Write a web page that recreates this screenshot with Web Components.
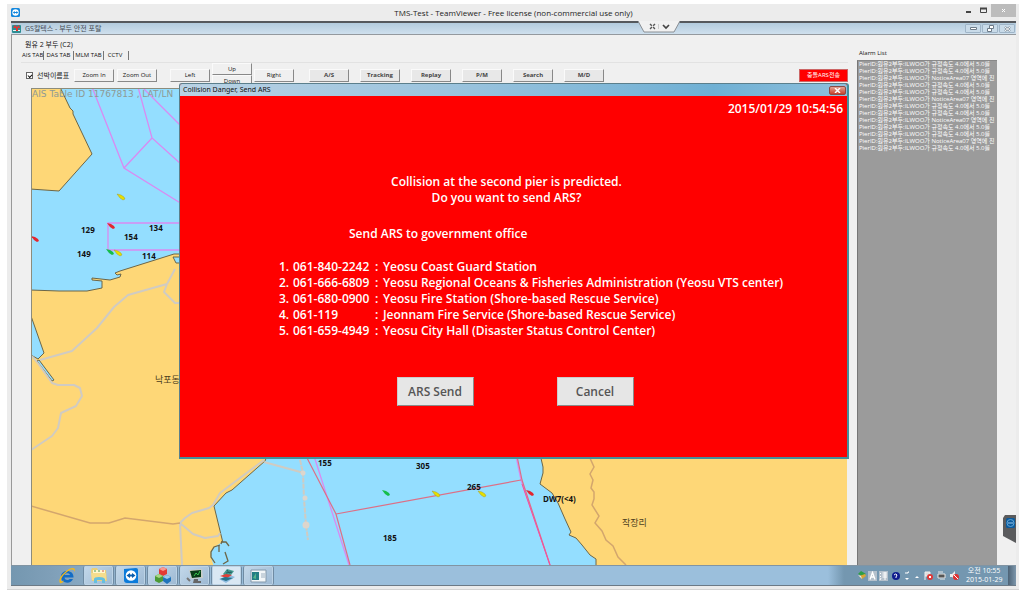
<!DOCTYPE html>
<html lang="ko">
<head>
<meta charset="utf-8">
<title>TMS-Test - TeamViewer</title>
<style>
body { margin: 0; background: #fff; font-family: "Open Sans", "Noto Sans CJK KR", sans-serif; color: #222; }
</style>
</head>
<body>
<remote-window>
  <remote-titlebar slot="title">TMS-Test - TeamViewer - Free license (non-commercial use only)</remote-titlebar>
  <mdi-titlebar>GS칼텍스 - 부두 안전 포탈</mdi-titlebar>
  <pier-portal>
    <pier-header slot="head">원유 2 부두 (C2)</pier-header>
    <map-toolbar slot="head"></map-toolbar>
    <sea-map slot="map"></sea-map>
    <alarm-list slot="side">Alarm List</alarm-list>
  </pier-portal>
  <task-bar></task-bar>
  <collision-dialog slot="over" heading="Collision Danger, Send ARS">
    <time slot="time">2015/01/29 10:54:56</time>
    <span slot="message">Collision at the second pier is predicted.<br>Do you want to send ARS?</span>
    <span slot="caption">Send ARS to government office</span>
  </collision-dialog>
</remote-window>

<script>
function define(name, html, setup) {
  customElements.define(name, class extends HTMLElement {
    constructor() {
      super();
      this.attachShadow({ mode: "open" }).innerHTML = html;
    }
    connectedCallback() { if (setup) setup(this.shadowRoot, this); }
  });
}

define("remote-window", `
<style>
:host { display: flex; flex-direction: column; box-sizing: border-box; min-height: calc(100vh - 10px); margin: 4px 5px 6px 7px; padding: 0 3px 3px 4px; background: #ececec; box-shadow: 0 1px 0 #d4d4d4; }
.screen { position: relative; flex: 1; display: flex; flex-direction: column; border-top: 2px solid #55585c; }
.pull { position: absolute; top: -2px; right: 336px; width: 42px; height: 12px; display: block; }
.side { position: absolute; right: 0; bottom: 43px; width: 13px; height: 28px; display: block; }
</style>
<slot name="title"></slot>
<div class="screen">
  <slot></slot>
  <slot name="over"></slot>
  <svg class="pull" viewBox="0 0 42 12"><path d="M0 0H42L36 11H6Z" fill="#f1f1f1"/><path d="M0 0L6 11H36L42 0" fill="none" stroke="#8a8f94"/><path d="M12 3l5 5M17 3l-5 5" stroke="#555" stroke-width="1.4" stroke-dasharray="2.6 1.8"/><path d="M20.500 3v5" stroke="#ccc"/><path d="M25 4l3 3 3-3" fill="none" stroke="#444" stroke-width="1.700"/></svg>
  <svg class="side" viewBox="0 0 13 28"><path d="M2 0H13V28L0 21V3Z" fill="#5a5b5d"/><rect x="3" y="3" width="9" height="10" rx="1.500" fill="#0b5a9c"/><ellipse cx="7.500" cy="8" rx="3.500" ry="3.500" fill="none" stroke="#5fa4d6"/><path d="M5 8h5" stroke="#9cc9ea"/></svg>
</div>`);

define("remote-titlebar", `
<style>
:host { display: grid; grid-template-columns: 80px 1fr 80px; height: 17px; align-items: center; font-size: 8px; line-height: 17px; color: #222; }
.logo { width: 9px; height: 9px; display: block; }
.title { text-align: center; white-space: nowrap; }
.controls { display: flex; justify-content: flex-end; align-self: start; }
button { border: 0; padding: 0; background: none; height: 13px; width: 15px; display: grid; place-items: center; }
button.close { width: 25px; background: #bcbcbc; }
svg { display: block; }
</style>
<svg class="logo" viewBox="0 0 9 9"><rect width="9" height="9" rx="1.500" fill="#1387dd"/><circle cx="4.500" cy="4.500" r="3.200" fill="#fff"/><path d="M1.800 4.500l2-1.500v1h1.500v-1l2 1.500-2 1.500v-1h-1.500v1z" fill="#1387dd"/></svg>
<span class="title"><slot></slot></span>
<span class="controls">
  <button aria-label="Minimize"><svg width="7" height="7"><path d="M1 5h5" stroke="#444" stroke-width="2"/></svg></button>
  <button aria-label="Maximize"><svg width="7" height="7"><path d="M.5 1.500h6v4h-6z" fill="none" stroke="#444"/><path d="M0 1.500h7" stroke="#444" stroke-width="2"/></svg></button>
  <button class="close" aria-label="Close"><svg width="7" height="7"><path d="M2 2l3 3M5 2l-3 3" stroke="#fff"/></svg></button>
</span>`);

define("mdi-titlebar", `
<style>
:host { display: flex; align-items: center; height: 11px; padding: 0 1px; gap: 4px; border-bottom: 1px solid #94999e; background: linear-gradient(#b3cbdd, #cfe0ee); font-size: 7px; line-height: 11px; color: #444c55; }
.name { flex: 1; white-space: nowrap; }
button { width: 16px; height: 9px; box-sizing: border-box; padding: 0; border: 1px solid #9fb5c8; border-radius: 1px; background: #c9dbe9; display: grid; place-items: center; margin: 0; }
svg { display: block; }
.btns { display: flex; gap: 1px; }
</style>
<svg width="9" height="9" viewBox="0 0 9 9"><rect y="1" width="9" height="8" rx="1" fill="#2c8d92"/><path d="M1 4l2-3 2 2 2-2 1 3z" fill="#d83b3b"/><path d="M1 6h7v1H1z" fill="#e9f4f4"/><path d="M4 4h2v3H4z" fill="#d33"/></svg>
<span class="name"><slot></slot></span>
<span class="btns">
<button aria-label="Minimize child"><svg width="7" height="5"><path d="M.5 1.500h6v2h-6z" fill="#fff" stroke="#6d7b88"/></svg></button>
<button aria-label="Restore child"><svg width="7" height="7"><path d="M2.500 .5h4v3h-4zM.5 3.500h4v3h-4z" fill="#fff" stroke="#6d7b88"/></svg></button>
<button aria-label="Close child"><svg width="7" height="6"><path d="M1 1l5 4M6 1l-5 4" stroke="#6d7b88" stroke-width="2"/><path d="M1 1l5 4M6 1l-5 4" stroke="#fff"/></svg></button>
</span>`);

define("pier-portal", `
<style>
:host { flex: 1; display: grid; grid-template-columns: minmax(0, 1fr) 140px; column-gap: 9px; padding: 0 19px 0 9px; background: #f0f0f0; border-left: 1px solid #999; }
.main { display: flex; flex-direction: column; }
.map { flex: 1; display: flex; margin-left: 10px; }
</style>
<div class="main"><slot name="head"></slot><div class="map"><slot name="map"></slot></div></div>
<slot name="side"></slot>`);

define("pier-header", `
<style>
:host { display: block; padding-top: 4px; border-bottom: 1px solid #e2e2e2; font-size: 6px; line-height: 11px; color: #111; }
h1 { margin: 0 0 0 4px; font: inherit; font-size: 7px; line-height: 11px; }
nav { display: flex; padding-left: 1px; }
a { color: inherit; text-decoration: none; box-sizing: border-box; width: 30px; text-align: center; border-right: 1px solid #777; line-height: 9px; margin: 1px 0 2px; white-space: nowrap; }
a:first-child { width: 22px; text-align: left; }
a:last-child { width: 25px; padding-right: 2px; }
</style>
<h1><slot></slot></h1>
<nav><a href="#ais">AIS TAB</a><a href="#das">DAS TAB</a><a href="#mlm">MLM TAB</a><a href="#cctv">CCTV</a></nav>`);

define("tool-button", `
<style>
:host { display: block; width: 40px; height: 13px; }
button { width: 100%; height: 100%; box-sizing: border-box; display: block; padding: 0; font: inherit; color: #111; line-height: 9px; background: #f0f0f0; border: 1px solid #fafafa; border-right: 1px solid #888; border-bottom: 1px solid #888; white-space: nowrap; }
:host([bold]) button { font-weight: 700; color: #444; background: #e8e8e8; }
:host([alert]) { width: 49px; }
:host([alert]) button { background: #f00; color: #fff; border-color: #c66; font-weight: 400; }
</style>
<button><slot></slot></button>`);

define("map-toolbar", `
<style>
:host { display: flex; align-items: center; height: 24px; padding: 0 0 1px 5px; font-size: 6px; color: #222; }
label { display: flex; align-items: center; gap: 4px; width: 48px; font-size: 7px; white-space: nowrap; }
input { appearance: none; width: 7px; height: 7px; margin: 0; border: 1px solid #666; background: #fff; display: grid; place-items: center; box-sizing: border-box; }
input:checked::before { content: ""; width: 3px; height: 2px; border: solid #111; border-width: 0 0 1px 1px; transform: rotate(-45deg); }
.zoom, .tools { display: flex; }
.zoom { gap: 3px; }
.pan { display: flex; align-items: center; gap: 2px; margin: 0 15px 0 13px; }
.stack { display: flex; flex-direction: column; }
.stack tool-button { height: 12px; }
.tools { gap: 11px; flex: 1; }
</style>
<label><input type="checkbox" checked>선박이름표</label>
<div class="zoom"><tool-button>Zoom In</tool-button><tool-button>Zoom Out</tool-button></div>
<div class="pan"><tool-button>Left</tool-button><div class="stack"><tool-button>Up</tool-button><tool-button>Down</tool-button></div><tool-button>Right</tool-button></div>
<div class="tools"><tool-button bold>A/S</tool-button><tool-button bold>Tracking</tool-button><tool-button bold>Replay</tool-button><tool-button bold>P/M</tool-button><tool-button bold>Search</tool-button><tool-button bold>M/D</tool-button></div>
<tool-button alert>충돌ARS전송</tool-button>`);

define("sea-map", `
<style>
:host { flex: 1; display: block; position: relative; min-height: 300px; margin-right: 1px; border: solid #8c8c7c; border-width: 1px 0 0 1px; background: #94deff; overflow: hidden; }
svg { position: absolute; inset: 0; width: 100%; height: 100%; }
.land { fill: #fed777; stroke: #6c6648; }
.road { fill: none; stroke: #d0cbc2; stroke-width: 2; stroke-linejoin: round; }
.path { fill: none; stroke: #d3a66d; stroke-width: 1.500; }
.lane { fill: none; stroke: #d98af2; stroke-width: 1.300; }
.red { fill: none; stroke: #dd6f86; stroke-width: 1.200; }
.shore { fill: none; stroke: #6c6648; stroke-width: 1.300; }
.depth { font-size: 8px; font-weight: 700; fill: #111; }
.place { font-size: 9px; fill: #4a3c1c; }
.info { font: 9px "DejaVu Sans", sans-serif; fill: #8e9a95; }
</style>
<svg role="img" aria-label="Pier chart">
<defs><path id="ship" d="M-4-3L0-2L3 0L4 2L2 3L-1 1Z"/></defs>
<g transform="translate(-32 -90)">
<path class="land" d="M30 86H59L70 109L73 112V115L92 155L59 192L30 190Z"/>
<path class="land" d="M270 255H174L155 261L120 272L115 274L117 276L121 275L120 278L110 281L92 279V281L102 282V289L87 292L59 292L30 291V568H214L223 544L214 507L226 494L232 491L265 462L270 450Z"/>
<path class="land" d="M540 455L543 468V474L540 485L552 494L558 504L565 520L571 533L569 536L576 539L582 546L590 556L596 560V568H3000V455Z"/>
<g fill="#94deff" stroke="#6c6648"><path d="M31 317L44 354L38 360L31 356ZM37 362L39 361L54 381L52 382ZM173 258H180V264H176Z"/></g>
<path d="M222 543L216 547L211 552V558L214 568H230V545Z" fill="#94deff"/>
<path class="shore" d="M222 542L221 545M220 546L214 548L211 553V558L215 564M219 546V553M222 543H226L229 547M225 553L228 562L223 565"/>
<path class="road" d="M175 270L167 285L128 296L114 308L97 329L72 352L40 361M167 285L164 293L175 304H180M32 357L40 367L52 384L58 386H74L80 389L82 397L76 407L61 414L58 429L52 437L31 451M264 461L220 494L213 506L209 509L192 514L185 519L180 524L182 566M180 524L193 535L205 539L218 537L220 534M264 463L304 474"/>
<path class="road" d="M300 461L303 474L304 500L306 526L308 541" stroke-dasharray="5 1"/>
<g fill="#ddd5cc"><circle cx="303" cy="474" r="2.500"/><circle cx="305" cy="499" r="2.500"/><circle cx="306" cy="526" r="3.500"/></g>
<path class="path" d="M31 507L90 524H109L125 519L173 525L180 524M589 457L594 468L590 475L593 481L591 489L594 493V500L592 506L599 517L595 524L602 532L606 541L613 547L618 558L626 566"/>
<path class="lane" d="M92 88L124 169L182 205M138 88L152 139L182 166M142 88L182 128M124 169L152 139M182 224H108V251H182M314 457L349 566M516 457L521 481L550 566"/>
<path class="red" d="M306 457L336 515L350 566M336 515L521 481M517 457L522 481L550 566"/>
<path d="M522 485L550 566" stroke="#f0539d"/>
<g fill="#e3262e"><use href="#ship" x="35" y="240"/><use href="#ship" x="111" y="227"/><use href="#ship" x="530" y="494"/></g>
<g fill="#e7df00" stroke="#998f20" stroke-width=".4"><use href="#ship" x="121" y="198"/><use href="#ship" x="118" y="254"/><use href="#ship" x="436" y="495"/><use href="#ship" x="482" y="495"/></g>
<g fill="#16bd4a"><use href="#ship" x="110" y="253"/><use href="#ship" x="386" y="494"/></g>
<g class="depth"><text x="81" y="234">129</text><text x="149" y="232">134</text><text x="124" y="241">154</text><text x="77" y="258">149</text><text x="142" y="260">114</text><text x="318" y="467">155</text><text x="416" y="470">305</text><text x="467" y="491">265</text><text x="383" y="542">185</text><text x="543" y="503">DW7(&lt;4)</text></g>
<text class="place" x="155" y="384">낙포동</text><text class="place" x="622" y="527">작장리</text>
<text class="info" x="32" y="98">AIS Table ID 11767813 , LAT/LN</text>
</g></svg>`);

define("alarm-list", `
<style>
:host { display: flex; flex-direction: column; padding-top: 13px; font-size: 6px; min-width: 0; }
h2 { margin: 0 0 2px 2px; font: inherit; line-height: 10px; color: #111; }
ul { flex: 1; margin: 0; padding: 0 0 0 1px; list-style: none; background: #9b9b9b; border-left: 1px solid #777; border-top: 1px solid #888; box-sizing: border-box; color: #fff; }
li { line-height: 7px; white-space: nowrap; }
</style>
<h2><slot></slot></h2><ul></ul>`, root => {
  const speed = "PierID:원유2부두:ILWOO가 규정속도 4.0에서 5.0를";
  const area = "PierID:원유2부두:ILWOO가 NoticeArea07 영역에 진";
  const ul = root.querySelector("ul");
  ul.replaceChildren(...[0,0,1,0,0,1,0,0,1,0,0,1,0].map(kind => {
    const li = document.createElement("li");
    li.textContent = kind ? area : speed;
    return li;
  }));
});

define("collision-dialog", `
<style>
:host { position: absolute; left: 168px; right: 167px; top: 60px; box-sizing: border-box; border: 1px solid #5b7f8c; border-right: 2px solid #43909c; border-bottom: 2px solid #43909c; border-radius: 3px 3px 0 0; background: #f00; color: #fff; font-size: 12px; font-weight: 600; line-height: 16px; }
header { display: flex; align-items: center; justify-content: space-between; height: 12px; padding: 0 1px 0 3px; border-radius: 2px 2px 0 0; background: linear-gradient(90deg, #b9d2e4, #9cc4de 40%, #6fb0d4 80%, #8fc0dc); color: #111; font-family: "Noto Sans", sans-serif; font-size: 7px; font-weight: 400; line-height: 12px; }
header button { width: 17px; height: 9px; padding: 0; border: 1px solid #8d4a44; border-radius: 2px; background: linear-gradient(#e3a395, #c8402b); display: grid; place-items: center; }
.body { display: flex; flex-direction: column; padding: 5px 4px 51px; }
.time { align-self: flex-end; }
.message { text-align: center; padding: 57px 14px 20px 0; }
.caption { padding-left: 165px; }
ol { display: grid; grid-template-columns: 14px 82px 8px auto; justify-content: start; margin: 17px 0 38px 95px; padding: 0; list-style: none; white-space: nowrap; }
li { display: contents; }
.actions { display: flex; justify-content: center; gap: 83px; padding-left: 3px; }
.actions button { width: 77px; height: 29px; padding: 0; border: 1px solid #8a8a8a; border-top-color: #ccc; border-left-color: #ccc; background: #e6e6e6; color: #555; font: inherit; }
</style>
<header><span class="heading"></span><button aria-label="Close"><svg width="7" height="5"><path d="M1 0l5 5M6 0l-5 5" stroke="#fff" stroke-width="1.500"/></svg></button></header>
<div class="body">
<div class="time"><slot name="time"></slot></div>
<div class="message"><slot name="message"></slot></div>
<div class="caption"><slot name="caption"></slot></div>
<ol></ol>
<div class="actions"><button>ARS Send</button><button>Cancel</button></div>
</div>`, (root, host) => {
  root.querySelector(".heading").textContent = host.getAttribute("heading");
  const offices = [
    ["061-840-2242", "Yeosu Coast Guard Station"],
    ["061-666-6809", "Yeosu Regional Oceans & Fisheries Administration (Yeosu VTS center)"],
    ["061-680-0900", "Yeosu Fire Station (Shore-based Rescue Service)"],
    ["061-119", "Jeonnam Fire Service (Shore-based Rescue Service)"],
    ["061-659-4949", "Yeosu City Hall (Disaster Status Control Center)"]
  ];
  root.querySelector("ol").replaceChildren(...offices.map(([phone, name], i) => {
    const li = document.createElement("li");
    li.append(...[`${i + 1}.`, phone, ":", name].map(text => {
      const span = document.createElement("span");
      span.textContent = text;
      return span;
    }));
    return li;
  }));
});

define("task-bar", `
<style>
:host { display: flex; height: 21px; box-sizing: border-box; border-top: 1px solid #8194a3; border-bottom: 1px solid #6c7a86; background: linear-gradient(90deg, #7497b0 0, #7f9fb8 40px, #8fb0cb 100px, #9bbfdc 260px, #9bbfdc calc(100% - 188px), #7497b0 calc(100% - 172px)); }
.grip { width: 5px; margin: 2px 0; background: radial-gradient(circle, #54708a 35%, transparent 40%) 0 0 / 2px 2px; }
.start { margin-left: 30px; }
.apps { display: flex; gap: 1px; margin-left: 5px; flex: 1; }
button { padding: 0; border: 0; background: none; }
.apps button { width: 31px; height: 19px; box-sizing: border-box; display: grid; place-items: center; }
.apps button + button { border: 1px solid #6f8ba3; border-top: 0; border-bottom: 0; border-radius: 2px; background: linear-gradient(135deg, #c3d8ea, #9db9d3); box-shadow: inset 0 0 0 1px #bcd3e6; }
.apps button.on { background: #d9e7f3; }
svg { display: block; }
.tray { display: flex; align-items: center; gap: 4px; margin-left: 5px; }
.ime { display: flex; align-items: center; gap: 1px; }
.clock { margin: 0 6px 0 7px; color: #fff; font-size: 7px; line-height: 9px; text-align: center; width: 36px; white-space: nowrap; }
.peek { width: 8px; height: 19px; background: linear-gradient(90deg, #4d6376, #7d97ac); }
</style>
<div class="grip start"></div>
<div class="apps">
<button aria-label="Internet Explorer"><svg width="18" height="18" viewBox="0 0 18 18"><path d="M15.500 10.500H6.500C7 13.500 10.500 13.500 11.500 12H15C13 17.500 3 17 3 9.500C3 2 16 2 15.500 10.500M6.500 8H12C11.500 5.500 7 5.500 6.500 8" fill="#136cc5" fill-rule="evenodd"/><path d="M2 16C-1 12 7 3 14 1c3-.5 3.500 1.500 2.500 4 0-2.500-2-3-4.500-2C7 5.500 2 12 3 14c1 1 2 0 3-.5C5 15.500 3 17 2 16" fill="#f2b81b"/></svg></button>
<button aria-label="Explorer"><svg width="18" height="17" viewBox="0 0 18 17"><path d="M1 3L2 1H7L8 3H16L17 14H2Z" fill="#e9cf7b"/><path d="M3 3h12v4H3z" fill="#fff7cf"/><path d="M4 4h2M8 4h2" stroke="#4b9c58"/><path d="M12 4h2" stroke="#d35b4e"/><path d="M1 6H16V13H2Z" fill="#f5dd8d"/><path d="M4 16v-4q0-2 5-2t6 2v4h-3v-3H7v3z" fill="#65c0df"/></svg></button>
<button aria-label="TeamViewer"><svg width="16" height="17" viewBox="0 0 16 17"><path d="M1 2L13 1Q15 1 15 3V16H4Q1 16 1 13Z" fill="#0c7bda"/><circle cx="8" cy="8.500" r="5.300" fill="#fff"/><path d="M3.500 8.500L7 6V7.500H9V6L12.500 8.500L9 11V9.500H7V11Z" fill="#0b5dac"/></svg></button>
<button aria-label="Modules"><svg width="18" height="17" viewBox="0 0 18 17"><path d="M5 2L9 0L13 2V7L9 9L5 7Z" fill="#e23a34"/><path d="M5 2L9 4L13 2L9 0Z" fill="#f69a92"/><path d="M1 9L5 7L9 9V14L5 16L1 14Z" fill="#4c9a35"/><path d="M1 9L5 11L9 9L5 7Z" fill="#a8d687"/><path d="M9 10L13 8L17 10V14L13 17L9 14Z" fill="#2074bb"/><path d="M9 10L13 12L17 10L13 8Z" fill="#9ccaec"/></svg></button>
<button aria-label="Monitor"><svg width="18" height="16" viewBox="0 0 18 16"><path d="M3 2L16 1L17 10L5 11Z" fill="#c9cdc8"/><path d="M4 3L15 2V9L6 10Z" fill="#093c18"/><path d="M8 8l2-3 2 2 2-4" fill="none" stroke="#38c24d"/><path d="M8 11h4v2h3v2H7z" fill="#666"/><path d="M1 10l3 3" stroke="#777" stroke-width="2"/></svg></button>
<button class="on" aria-label="Chart portal"><svg width="18" height="16" viewBox="0 0 18 16"><path d="M1 11L12 7L17 9L8 15Z" fill="#8fbbe0"/><path d="M5 6L9 1L16 3L13 7L7 8Z" fill="#43998f"/><path d="M2 8L8 6L14 7L9 10Z" fill="#df4038"/><path d="M2 11L7 9L15 10L8 13Z" fill="#27738b"/><path d="M9 2l2 3 3-1M8 5l5-1" stroke="#245f63" fill="none"/></svg></button>
<button aria-label="Console"><svg width="17" height="14" viewBox="0 0 17 14"><path d="M1 1H16V13H1Z" fill="#f2f6f8" stroke="#8298ab"/><path d="M2 3h7v8H2z" fill="#237e84"/><path d="M3 9l3-5v6z" fill="#54b48b"/><path d="M11 4h4v5h-4z" fill="#c8d3dc"/></svg></button>
</div>
<div class="grip"></div>
<div class="tray">
<div class="ime"><svg width="9" height="9" viewBox="0 0 9 9"><path d="M0 3l3-3 5 3-4 2z" fill="#2d9e45"/><path d="M1 5l3 3 4-3-1-2z" fill="#d7a634"/><path d="M0 4l3 1 1 3z" fill="#dce9f5"/></svg>
<svg width="20" height="10" viewBox="0 0 20 10"><path d="M0 0h9v10H0zM11 0h9v10h-9z" fill="#b4c0cb"/><path d="M2 8.500l2.500-7 2.500 7M3 6h3" fill="none" stroke="#fff" stroke-width="1.300"/><path d="M14.500 2h4.500M14.500 4h4.500M14.500 6h4.500M17 1v8M12 2l1 1M12 5l1 1M12 9l1-2" stroke="#fff"/></svg></div>
<svg width="8" height="8"><circle cx="4" cy="4" r="4" fill="#101d8e"/><path d="M2 3q2-2 3 0l-1 2v1" fill="none" stroke="#fff"/></svg>
<svg width="6" height="10"><path d="M1 2h3v-1h1" stroke="#fff" fill="none"/><path d="M1 7h4l-2 2z" fill="#fff"/></svg>
<svg width="6" height="4"><path d="M1 4l2-2 2 2z" fill="#fff"/></svg>
<svg width="9" height="9"><path d="M1 1v8M1 1h5v4h-5" fill="#ddd" stroke="#eee"/><circle cx="6" cy="6" r="3" fill="#df3838"/><path d="M5 5l2 2M7 5l-2 2" stroke="#fff"/></svg>
<svg width="9" height="9"><path d="M1 3h7v4h-7zM1 1h5M3 9h5" stroke="#e9e9e9" fill="#555"/></svg>
<svg width="9" height="9"><path d="M0 3h2l3-3v8l-3-2H0z" fill="#eee"/><circle cx="6" cy="6" r="3" fill="#e03030"/><path d="M4 4l4 4" stroke="#fff"/></svg>
</div>
<div class="clock">오전 10:55<br>2015-01-29</div>
<div class="peek"></div>`);
</script>
</body>
</html>
